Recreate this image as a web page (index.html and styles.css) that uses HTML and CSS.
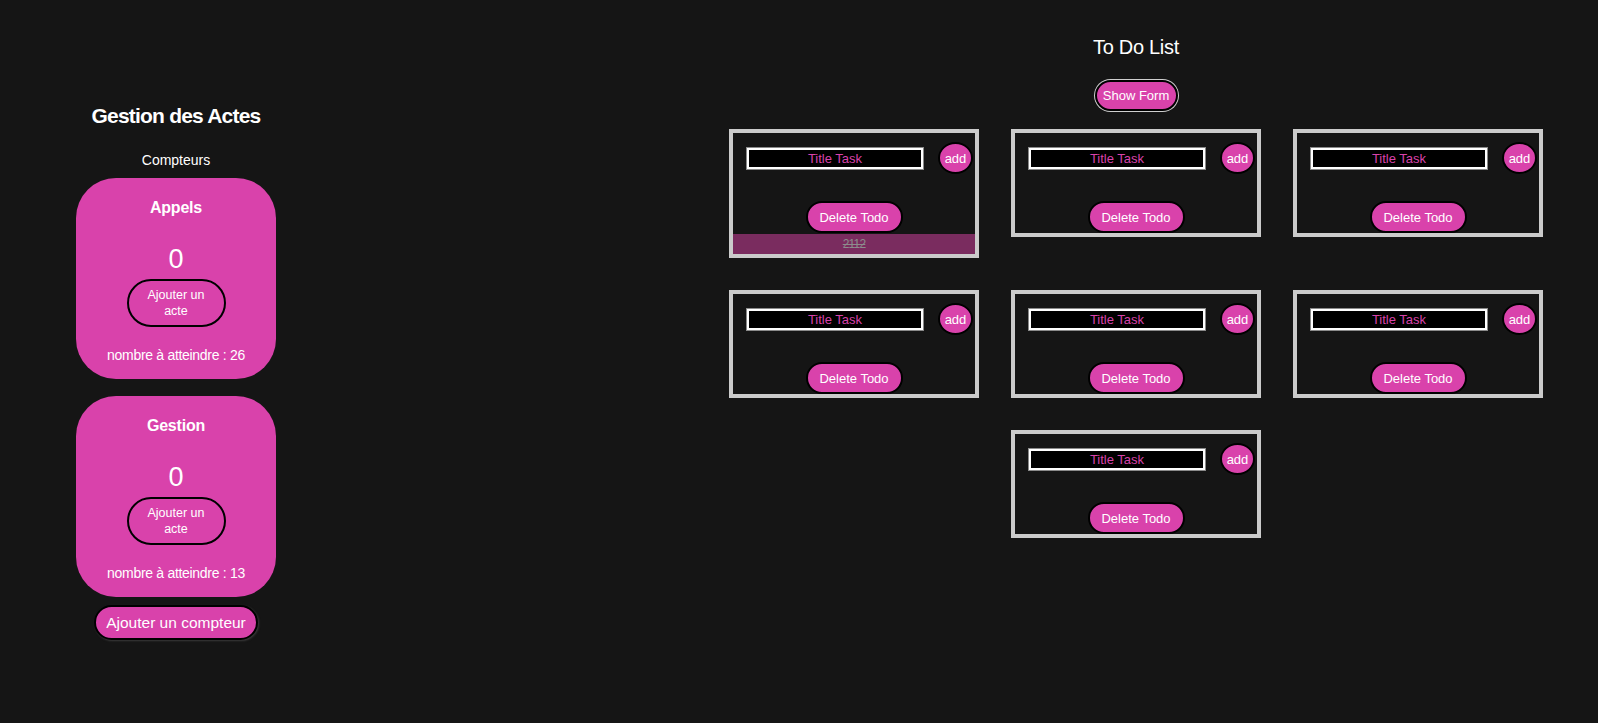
FILE: index.html
```html
<!DOCTYPE html>
<html lang="fr">
<head>
<meta charset="utf-8">
<title>Gestion des Actes</title>
<link rel="stylesheet" href="styles.css">
</head>
<body>
<div class="page">
  <section class="left">
    <h1 class="left-title">Gestion des Actes</h1>
    <p class="subtitle">Compteurs</p>
    <div class="counter">
      <h2 class="counter-name">Appels</h2>
      <div class="counter-value">0</div>
      <button class="btn-acte">Ajouter un<br>acte</button>
      <p class="counter-goal">nombre à atteindre : 26</p>
    </div>
    <div class="counter second">
      <h2 class="counter-name">Gestion</h2>
      <div class="counter-value">0</div>
      <button class="btn-acte">Ajouter un<br>acte</button>
      <p class="counter-goal">nombre à atteindre : 13</p>
    </div>
    <button class="btn-compteur">Ajouter un compteur</button>
  </section>
  <section class="right">
    <h1 class="right-title">To Do List</h1>
    <button class="btn-show">Show Form</button>
    <div class="grid">
      <div class="todo">
        <div class="todo-row"><input class="task-input" placeholder="Title Task"><button class="btn-add">add</button></div>
        <button class="btn-delete">Delete Todo</button>
        <div class="done">2112</div>
      </div>
      <div class="todo">
        <div class="todo-row"><input class="task-input" placeholder="Title Task"><button class="btn-add">add</button></div>
        <button class="btn-delete">Delete Todo</button>
      </div>
      <div class="todo">
        <div class="todo-row"><input class="task-input" placeholder="Title Task"><button class="btn-add">add</button></div>
        <button class="btn-delete">Delete Todo</button>
      </div>
      <div class="todo">
        <div class="todo-row"><input class="task-input" placeholder="Title Task"><button class="btn-add">add</button></div>
        <button class="btn-delete">Delete Todo</button>
      </div>
      <div class="todo">
        <div class="todo-row"><input class="task-input" placeholder="Title Task"><button class="btn-add">add</button></div>
        <button class="btn-delete">Delete Todo</button>
      </div>
      <div class="todo">
        <div class="todo-row"><input class="task-input" placeholder="Title Task"><button class="btn-add">add</button></div>
        <button class="btn-delete">Delete Todo</button>
      </div>
      <div class="todo col2">
        <div class="todo-row"><input class="task-input" placeholder="Title Task"><button class="btn-add">add</button></div>
        <button class="btn-delete">Delete Todo</button>
      </div>
    </div>
  </section>
</div>
</body>
</html>
```
FILE: styles.css
```css
* { box-sizing: border-box; }
html, body { margin: 0; padding: 0; }
body {
  background: #151515;
  color: #fff;
  font-family: "Liberation Sans", Arial, sans-serif;
  width: 1598px;
  height: 723px;
  overflow: hidden;
}
.page { display: flex; }
button, input { font-family: inherit; color: #fff; cursor: pointer; }

.left {
  width: 352px;
  display: flex;
  flex-direction: column;
  align-items: center;
  padding-top: 101px;
}
.left-title {
  margin: 0;
  font-size: 21px;
  line-height: 30px;
  font-weight: bold;
  letter-spacing: -0.8px;
}
.subtitle {
  margin: 19px 0 0;
  font-size: 14px;
  line-height: 20px;
}
.counter {
  margin-top: 8px;
  width: 200px;
  background: #d942ab;
  border-radius: 40px;
  padding: 18px 0 14px;
  display: flex;
  flex-direction: column;
  align-items: center;
}
.counter.second { margin-top: 17px; }
.counter-name {
  margin: 0;
  font-size: 16px;
  line-height: 24px;
  font-weight: bold;
  letter-spacing: -0.2px;
}
.counter-value {
  margin-top: 24px;
  font-size: 27px;
  line-height: 30px;
}
.btn-acte {
  margin-top: 5px;
  width: 99px;
  height: 48px;
  border: 2px solid #000;
  border-radius: 24px;
  background: #d942ab;
  font-size: 12.5px;
  line-height: 16px;
  padding: 0;
}
.counter-goal {
  margin: 18px 0 0;
  font-size: 14px;
  line-height: 20px;
  letter-spacing: -0.3px;
}
.btn-compteur {
  margin-top: 8px;
  width: 164px;
  height: 35px;
  border: 2px solid #000;
  border-radius: 18px;
  background: #d942ab;
  font-size: 15.5px;
  padding: 0;
  white-space: nowrap;
  box-shadow: 1px 1px 2px #3a3a3a;
}

.right {
  width: 924px;
  margin-left: auto;
  display: flex;
  flex-direction: column;
  align-items: center;
  padding-top: 33px;
}
.right-title {
  margin: 0;
  font-size: 20px;
  line-height: 28px;
  font-weight: normal;
  letter-spacing: -0.3px;
}
.btn-show {
  margin-top: 19px;
  width: 83px;
  height: 31px;
  border: 2px solid #000;
  border-radius: 16px;
  background: #d942ab;
  box-shadow: 0 0 0 1px #cfcfcf;
  font-size: 13px;
  padding: 0;
}
.grid {
  margin-top: 18px;
  display: grid;
  grid-template-columns: repeat(3, 250px);
  gap: 32px;
  align-items: start;
}
.col2 { grid-column: 2; }
.todo {
  border: 4px solid #cbcbcb;
  background: #151515;
  display: flex;
  flex-direction: column;
  align-items: center;
}
.todo-row {
  width: 100%;
  display: flex;
  align-items: center;
  padding: 9px 2px 0 14px;
  gap: 15px;
}
.task-input {
  width: 176px;
  height: 21px;
  border: 2px solid #fff;
  box-shadow: 0 0 0 1px #8a8a8a;
  background: #000;
  color: #d942ab;
  text-align: center;
  font-size: 13px;
  padding: 0;
  outline: none;
}
.task-input::placeholder { color: #d942ab; opacity: 1; }
.btn-add {
  width: 35px;
  height: 32px;
  border: 2px solid #000;
  border-radius: 50%;
  background: #d942ab;
  font-size: 13px;
  padding: 0;
}
.btn-delete {
  margin-top: 27px;
  width: 97px;
  height: 32px;
  border: 2px solid #000;
  border-radius: 16px;
  background: #d942ab;
  font-size: 13px;
  padding: 0;
}
.done {
  margin-top: 1px;
  width: 100%;
  height: 20px;
  background: #7a2c5f;
  color: #8c8c8c;
  text-decoration: line-through;
  font-size: 12px;
  letter-spacing: -0.8px;
  line-height: 20px;
  text-align: center;
}
```
